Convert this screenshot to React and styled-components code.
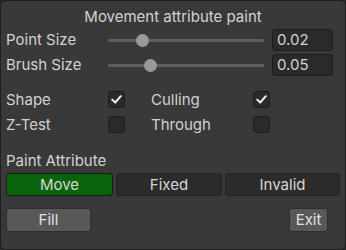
import React from "react";
import styled, { createGlobalStyle } from "styled-components";

const Global = createGlobalStyle`
  html, body { margin: 0; padding: 0; background: #282828; }
  body { font-family: Inter, "Noto Sans", sans-serif; }
  * { box-sizing: border-box; }
`;

const Panel = styled.div`
  width: 346px;
  height: 250px;
  background: #393939;
  border: 1px solid #1f1f1f;
  border-radius: 5px;
  padding: 5px 5px 0 5px;
  color: #d2d2d2;
  font-size: 15px;
  display: flex;
  flex-direction: column;
`;

const Title = styled.div`
  height: 22px;
  line-height: 22px;
  text-align: center;
`;

const SliderRow = styled.div`
  display: flex;
  align-items: center;
  height: 22px;
  margin-top: ${(p) => p.$mt || 0}px;
`;

const Label = styled.div`
  line-height: 18px;
  white-space: nowrap;
  width: ${(p) => p.$w || 102}px;
  flex: none;
`;

const Track = styled.div`
  position: relative;
  width: 156px;
  height: 3px;
  background: #5e5e5e;
  border-radius: 1px;
  flex: none;
`;

const Thumb = styled.div`
  position: absolute;
  top: -5px;
  width: 13px;
  height: 13px;
  border-radius: 50%;
  background: #999999;
`;

const Field = styled.div`
  width: 61px;
  height: 22px;
  margin-left: 8px;
  background: #2a2a2a;
  border: 1px solid #1d1d1d;
  border-radius: 3px;
  padding-left: 4px;
  line-height: 20px;
  color: #d2d2d2;
`;

const ToggleGrid = styled.div`
  display: grid;
  grid-template-columns: 145px 145px;
  grid-auto-rows: 25px;
  margin-top: 11px;
`;

const ToggleCell = styled.div`
  display: flex;
  align-items: center;
`;

const Box = styled.div`
  width: 17px;
  height: 17px;
  background: #2a2a2a;
  border: 1px solid #1d1d1d;
  border-radius: 3px;
  display: flex;
  align-items: center;
  justify-content: center;
`;

const Section = styled.div`
  margin-top: 14px;
  height: 20px;
  line-height: 20px;
`;

const Segments = styled.div`
  display: grid;
  grid-template-columns: 107px 106px 115px;
  column-gap: 3px;
  margin-top: 2px;
`;

const Segment = styled.div`
  height: 23px;
  line-height: 21px;
  text-align: center;
  border: 1px solid ${(p) => (p.$active ? "#1a1a1a" : "#232323")};
  border-radius: 3px;
  background: ${(p) => (p.$active ? "#0b640b" : "#2b2b2b")};
  color: #d6d6d6;
`;

const Footer = styled.div`
  display: flex;
  justify-content: space-between;
  margin-top: 12px;
  padding-right: 12px;
`;

const Button = styled.div`
  width: ${(p) => p.$w}px;
  height: 24px;
  line-height: 22px;
  text-align: center;
  background: #585858;
  border: 1px solid #2e2e2e;
  border-radius: 3px;
  color: #e0e0e0;
`;

const Check = () => (
  <svg width="11" height="9" viewBox="0 0 11 9">
    <path d="M1.2 4.6 L4.2 7.5 L9.8 1.2" fill="none" stroke="#f0f0f0" strokeWidth="2" strokeLinecap="round" strokeLinejoin="round" />
  </svg>
);

const Slider = ({ pos }) => (
  <Track>
    <Thumb style={{ left: pos }} />
  </Track>
);

export default function App() {
  return (
    <>
      <Global />
      <Panel>
        <Title>Movement attribute paint</Title>
        <SliderRow $mt={1}>
          <Label>Point Size</Label>
          <Slider pos={28} />
          <Field>0.02</Field>
        </SliderRow>
        <SliderRow $mt={3}>
          <Label>Brush Size</Label>
          <Slider pos={36} />
          <Field>0.05</Field>
        </SliderRow>
        <ToggleGrid>
          <ToggleCell>
            <Label>Shape</Label>
            <Box><Check /></Box>
          </ToggleCell>
          <ToggleCell>
            <Label>Culling</Label>
            <Box><Check /></Box>
          </ToggleCell>
          <ToggleCell>
            <Label>Z-Test</Label>
            <Box />
          </ToggleCell>
          <ToggleCell>
            <Label>Through</Label>
            <Box />
          </ToggleCell>
        </ToggleGrid>
        <Section>Paint Attribute</Section>
        <Segments>
          <Segment $active>Move</Segment>
          <Segment>Fixed</Segment>
          <Segment>Invalid</Segment>
        </Segments>
        <Footer>
          <Button $w={85}>Fill</Button>
          <Button $w={39}>Exit</Button>
        </Footer>
      </Panel>
    </>
  );
}
